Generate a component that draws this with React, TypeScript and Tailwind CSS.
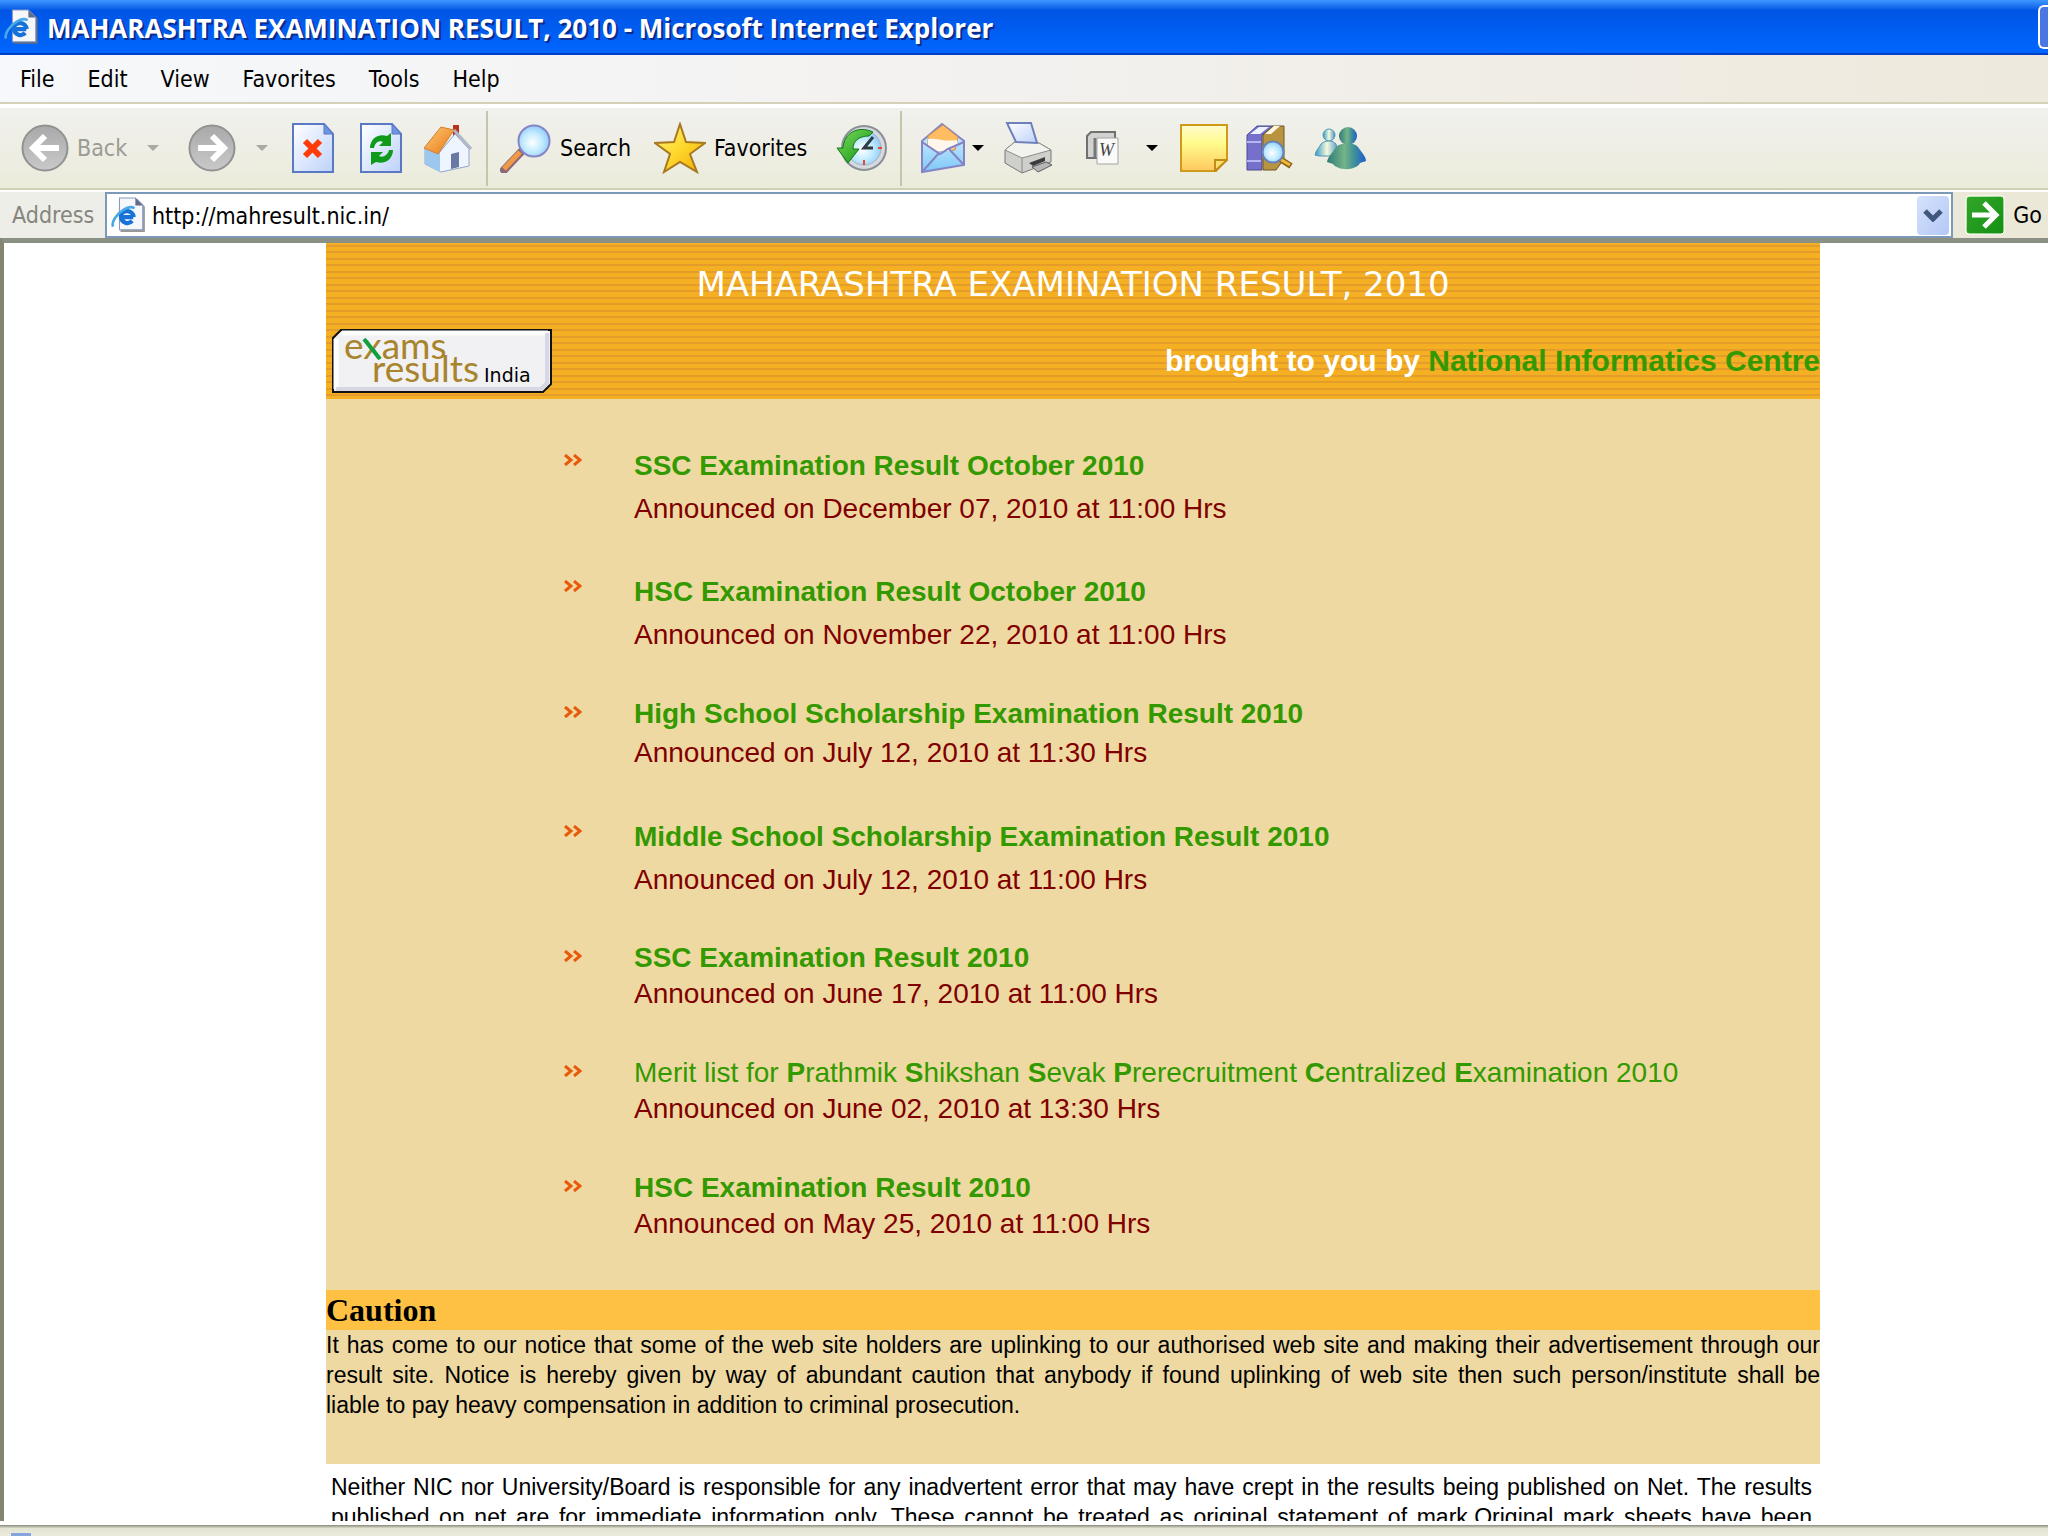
import {useState} from "react";
import type {ReactNode} from "react";

type Result = {
  title: ReactNode;
  announced: string;
  roomy?: boolean;
  gap: string;
  space: string;
};

const menus = ["File", "Edit", "View", "Favorites", "Tools", "Help"];

const results: Result[] = [
  {
    title: "SSC Examination Result October 2010",
    announced: "Announced on December 07, 2010 at 11:00 Hrs",
    roomy: true,
    gap: "gap-[7px]",
    space: "pb-[47px]",
  },
  {
    title: "HSC Examination Result October 2010",
    announced: "Announced on November 22, 2010 at 11:00 Hrs",
    roomy: true,
    gap: "gap-[7px]",
    space: "pb-[43px]",
  },
  {
    title: "High School Scholarship Examination Result 2010",
    announced: "Announced on July 12, 2010 at 11:30 Hrs",
    gap: "gap-[3px]",
    space: "pb-[48px]",
  },
  {
    title: "Middle School Scholarship Examination Result 2010",
    announced: "Announced on July 12, 2010 at 11:00 Hrs",
    roomy: true,
    gap: "gap-[7px]",
    space: "pb-[42px]",
  },
  {
    title: "SSC Examination Result 2010",
    announced: "Announced on June 17, 2010 at 11:00 Hrs",
    gap: "gap-0",
    space: "pb-[43px]",
  },
  {
    title: (
      <span className="font-normal">
        Merit list for <b>P</b>rathmik <b>S</b>hikshan <b>S</b>evak <b>P</b>
        rerecruitment <b>C</b>entralized <b>E</b>xamination 2010
      </span>
    ),
    announced: "Announced on June 02, 2010 at 13:30 Hrs",
    gap: "gap-0",
    space: "pb-[43px]",
  },
  {
    title: "HSC Examination Result 2010",
    announced: "Announced on May 25, 2010 at 11:00 Hrs",
    gap: "gap-0",
    space: "pb-[48px]",
  },
];

const uiFont = "font-['DejaVu_Sans_Condensed','Noto_Sans',sans-serif]";

const Defs = () => (
  <svg className="absolute h-0 w-0" aria-hidden="true">
    <defs>
      <linearGradient id="grey" x1="0" y1="0" x2="0" y2="1">
        <stop offset="0" stopColor="#a9a9a9" />
        <stop offset="1" stopColor="#c9c9c9" />
      </linearGradient>
      <linearGradient id="page" x1="0" y1="0" x2="1" y2="1">
        <stop offset="0" stopColor="#ffffff" />
        <stop offset="1" stopColor="#bcd2fa" />
      </linearGradient>
      <linearGradient id="gold" x1="0" y1="0" x2="1" y2="1">
        <stop offset="0" stopColor="#fff27a" />
        <stop offset="0.5" stopColor="#ffd92e" />
        <stop offset="1" stopColor="#f0a800" />
      </linearGradient>
      <linearGradient id="roof" x1="0" y1="0" x2="1" y2="1">
        <stop offset="0" stopColor="#ffc870" />
        <stop offset="1" stopColor="#e8791a" />
      </linearGradient>
      <linearGradient id="note" x1="0" y1="0" x2="0" y2="1">
        <stop offset="0" stopColor="#fffbd0" />
        <stop offset="0.4" stopColor="#fffb8a" />
        <stop offset="1" stopColor="#ffc860" />
      </linearGradient>
      <radialGradient id="lens" cx="0.45" cy="0.55" r="0.6">
        <stop offset="0" stopColor="#ffffff" />
        <stop offset="0.5" stopColor="#c4ecff" />
        <stop offset="1" stopColor="#8cc8f8" />
      </radialGradient>
      <linearGradient id="sky" x1="0" y1="0" x2="0" y2="1">
        <stop offset="0" stopColor="#e4f6ff" />
        <stop offset="1" stopColor="#7cc8f8" />
      </linearGradient>
      <linearGradient id="leaf" x1="0" y1="0" x2="1" y2="1">
        <stop offset="0" stopColor="#7ade5c" />
        <stop offset="1" stopColor="#108c10" />
      </linearGradient>
      <linearGradient id="buddy" x1="0" y1="0" x2="1" y2="0">
        <stop offset="0" stopColor="#2f7a78" />
        <stop offset="0.45" stopColor="#74b488" />
        <stop offset="0.7" stopColor="#3f8f9a" />
        <stop offset="1" stopColor="#1c5cd0" />
      </linearGradient>
      <linearGradient id="buddyPale" x1="0" y1="0" x2="1" y2="0">
        <stop offset="0" stopColor="#2f98c8" />
        <stop offset="0.5" stopColor="#f6fadc" />
        <stop offset="1" stopColor="#3f90c8" />
      </linearGradient>
    </defs>
  </svg>
);

const IePage = ({className}: {className: string}) => (
  <svg viewBox="0 0 34 34" className={className} aria-hidden="true">
    <path d="M9 2h16l7 7v24H9z" fill="#6d6d66" opacity="0.7" />
    <path d="M8 1h15l7 7v23H8z" fill="#f6f7fb" stroke="#8a9ac4" />
    <path d="M23 1v7h7z" fill="#5f6c8c" />
    <path
      d="M21 19H9.500a6 6 0 0 0 10.500 3.500M9 17.500a6.500 6.500 0 0 1 12.500 1.500"
      fill="none"
      stroke="#1672d8"
      strokeWidth="4"
    />
    <path
      d="M2 28c-2-4 3-12 10-16 5-3 9-3 10-1"
      fill="none"
      stroke="#49a8e8"
      strokeWidth="2.500"
    />
  </svg>
);

const RoundArrow = ({flip}: {flip?: boolean}) => (
  <svg viewBox="0 0 48 48" className="h-12 w-12 shrink-0" aria-hidden="true">
    <circle cx="24" cy="24" r="22.500" fill="url(#grey)" stroke="#929292" strokeWidth="2" />
    <path
      d={flip ? "M10 24h25M24 12l12 12-12 12" : "M38 24H13M24 12L12 24l12 12"}
      fill="none"
      stroke="#fff"
      strokeWidth="6"
    />
  </svg>
);

const Caret = ({muted}: {muted?: boolean}) => (
  <svg viewBox="0 0 12 8" className="h-2 w-3 shrink-0" aria-hidden="true">
    <path d="M0 1h12L6 7z" fill={muted ? "#a9a9a4" : "#000"} />
  </svg>
);

const PageShape = ({children}: {children: ReactNode}) => (
  <svg viewBox="0 0 42 50" className="h-[50px] w-[42px] shrink-0" aria-hidden="true">
    <path d="M1 1h31l9 10v38H1z" fill="url(#page)" stroke="#5a78c4" strokeWidth="2" />
    <path d="M32 1v10h9z" fill="#6f94e0" stroke="#5a78c4" />
    {children}
  </svg>
);

const StopIcon = () => (
  <PageShape>
    <path d="M13 18l15 15M28 18L13 33" stroke="#ff3b0a" strokeWidth="6" />
  </PageShape>
);

const RefreshIcon = () => (
  <PageShape>
    <path d="M10 25c0-9 8-15 17-12l4-3v13H19l4-4c-4-2-8 1-9 6z" fill="#0f9a1a" />
    <path d="M33 27c0 9-8 15-17 12l-5 3V29h12l-4 4c4 2 9-1 10-6z" fill="#0f9a1a" />
  </PageShape>
);

const HomeIcon = () => (
  <svg viewBox="0 0 50 50" className="h-[50px] w-[50px] shrink-0" aria-hidden="true">
    <path d="M31 2h6v14h-6z" fill="#b83224" />
    <path d="M3 25l14 5 16-19 14 15v17L19 49 3 41z" fill="#eef5ff" stroke="#8fa6cc" />
    <path d="M3 25l15 5v19L3 41z" fill="#9cc8f0" />
    <path d="M19 4l13 3-16 24L2 25z" fill="url(#roof)" stroke="#d08030" />
    <path d="M32 7l17 19" stroke="#b0b8c8" strokeWidth="3" />
    <path d="M29 31l8-2v15l-8 2z" fill="#6a78a4" />
  </svg>
);

const SearchIcon = () => (
  <svg viewBox="0 0 52 50" className="h-[50px] w-[52px] shrink-0" aria-hidden="true">
    <path d="M21 29L4 47" stroke="#8c6878" strokeWidth="8" strokeLinecap="round" />
    <path d="M20 29L4 46" stroke="#f09a48" strokeWidth="5" />
    <circle cx="34" cy="18" r="15.500" fill="url(#lens)" stroke="#8484c8" strokeWidth="2" />
  </svg>
);

const StarIcon = () => (
  <svg viewBox="0 0 52 52" className="h-[52px] w-[52px] shrink-0" aria-hidden="true">
    <path
      d="M26 2l6 18 19 1-15 11 7 18-17-10-16 10 6-18L1 21l19-1z"
      fill="url(#gold)"
      stroke="#a87820"
      strokeWidth="2"
    />
  </svg>
);

const HistoryIcon = () => (
  <svg viewBox="0 0 52 50" className="h-[50px] w-[52px] shrink-0" aria-hidden="true">
    <circle cx="28" cy="25" r="22" fill="#d4dae0" stroke="#8a8f96" strokeWidth="2" />
    <circle cx="28" cy="25" r="17" fill="url(#lens)" stroke="#a8b0bc" />
    <path d="M37 14L28 25h9" fill="none" stroke="#303c44" strokeWidth="3" />
    <path d="M28 37v5M42 25h4" stroke="#e84830" strokeWidth="2" />
    <path
      d="M37 9C22 2 8 10 7 25H1l11 15 11-14h-6c0-8 6-13 16-13z"
      fill="url(#leaf)"
      stroke="#107818"
    />
  </svg>
);

const MailIcon = () => (
  <svg viewBox="0 0 46 52" className="h-[52px] w-[46px] shrink-0" aria-hidden="true">
    <path d="M2 19L22 2l22 17v24L2 50z" fill="url(#sky)" stroke="#8484c4" strokeWidth="2" />
    <path d="M8 14L23 3l15 12-3 13-14 1L8 25z" fill="#ffbc60" stroke="#d0905c" />
    <path d="M8 17c10-1 14 3 29 1v6l-8 5H15l-7-4z" fill="#fff6ec" />
    <path d="M2 20l18 12 8-5 16-7M3 49l16-18M43 42L29 27" fill="none" stroke="#8484c4" strokeWidth="2" />
  </svg>
);

const PrinterIcon = () => (
  <svg viewBox="0 0 52 52" className="h-[52px] w-[52px] shrink-0" aria-hidden="true">
    <path d="M3 28l11-9 23 2 12 7v12L20 51 3 41z" fill="#cfcfcb" stroke="#77777a" />
    <path d="M3 28l17 8 29-8-12-7-23-2z" fill="#f2f2ee" stroke="#8c8c8c" />
    <path d="M20 36v14" stroke="#88888a" />
    <path d="M5 1h24l6 20-21-1z" fill="url(#page)" stroke="#6e80bc" strokeWidth="2" />
    <path d="M27 41l16-6v4l-12 5z" fill="#3c3c40" />
    <path d="M30 45l14-5 6 3-14 7z" fill="#b8b8b8" stroke="#5e5e60" />
  </svg>
);

const WordIcon = () => (
  <svg viewBox="0 0 34 36" className="h-9 w-[34px] shrink-0" aria-hidden="true">
    <path d="M5 2h24v26H1V6z" fill="#d2d2d0" stroke="#707070" strokeWidth="2" />
    <path d="M9 8v20" stroke="#777" strokeWidth="3" />
    <path d="M11 8h21v26H11z" fill="#fafafa" stroke="#a4a4a4" />
    <text x="13" y="26" fill="#444" className="font-['Liberation_Serif',serif] text-[18px] italic">
      W
    </text>
  </svg>
);

const NoteIcon = () => (
  <svg viewBox="0 0 48 48" className="h-12 w-12 shrink-0" aria-hidden="true">
    <path d="M1 1h46v34L36 47H1z" fill="url(#note)" stroke="#cf9a18" strokeWidth="2" />
    <path d="M35 47V36h12z" fill="#f8e070" stroke="#c08c14" strokeWidth="2" />
  </svg>
);

const BooksIcon = () => (
  <svg viewBox="0 0 48 46" className="h-[46px] w-12 shrink-0" aria-hidden="true">
    <path d="M1 10L11 1h16L16 10v35H1z" fill="#7470cc" stroke="#4c4890" />
    <path d="M4 9l9-7h10l-9 7z" fill="#eef2ff" />
    <path d="M1 17h14M1 36h14" stroke="#b8b6f2" strokeWidth="2" />
    <path d="M17 10L27 1h11v33l-8 11H17z" fill="#b99440" stroke="#6c5620" />
    <path d="M19 9l9-8h6l-9 8z" fill="#fff6e0" />
    <path d="M34 34l11 7" stroke="#8a6414" strokeWidth="6" />
    <path d="M34 34l10 6" stroke="#f0b83c" strokeWidth="3" />
    <circle cx="27" cy="27" r="10.500" fill="url(#lens)" stroke="#6484b8" strokeWidth="2" />
  </svg>
);

const PeopleIcon = () => (
  <svg viewBox="0 0 52 44" className="h-11 w-[52px] shrink-0" aria-hidden="true">
    <circle cx="15" cy="9" r="6" fill="url(#buddyPale)" stroke="#4f98b4" />
    <path d="M1 29c1-5 4-7 6-11 4-4 12-4 15 0l3 12H5z" fill="url(#buddyPale)" stroke="#4f98b4" />
    <circle cx="34" cy="10" r="9" fill="url(#buddy)" />
    <path d="M13 36c1-6 6-9 9-15 5-5 18-5 22 0 3 5 8 9 8 14l-6 2c-4 8-22 8-27 1z" fill="url(#buddy)" />
  </svg>
);

const Divider = ({className}: {className: string}) => (
  <div className={`h-[75px] w-[2px] shrink-0 bg-[#c5c5ac] ${className}`} />
);

const TitleBar = () => (
  <header className="flex h-[55px] items-center border-b-2 border-[#0040c8] bg-linear-to-b from-[#3f96ff] via-[#0055e5] via-20% to-[#0066ff]">
    <IePage className="ml-1 h-9 w-9 shrink-0" />
    <h1 className="ml-[7px] flex-1 truncate pt-1 font-['Open_Sans',sans-serif] text-[26px] font-bold text-white [text-shadow:2px_2px_0_#0a2a8c]">
      MAHARASHTRA EXAMINATION RESULT, 2010 - Microsoft Internet Explorer
    </h1>
    <button
      type="button"
      aria-label="Minimize"
      className="h-11 w-[10px] rounded-l-md border-2 border-r-0 border-white bg-[#4a76e4]"
    />
  </header>
);

const MenuBar = () => (
  <nav className="flex h-[49px] items-center gap-[33px] border-b-2 border-[#d4d1b8] bg-linear-to-r from-[#f6f8fb] via-[#f3f1ef] to-[#eee9dc] pl-5">
    {menus.map((menu) => (
      <button key={menu} type="button" className="text-[23px] leading-7">
        {menu}
      </button>
    ))}
  </nav>
);

const Toolbar = () => (
  <div className="flex h-[86px] items-center overflow-hidden border-t-4 border-b-2 border-t-white border-b-[#d2d0b4] bg-linear-to-b from-[#f1f1ee] to-[#ebebdb] pl-[21px] text-[23px]">
    <button type="button" disabled className="flex items-center gap-2 text-[#9b9b94]">
      <RoundArrow />
      <span className="w-[63px] text-left">Back</span>
    </button>
    <button type="button" disabled aria-label="Back history" className="ml-[7px]">
      <Caret muted />
    </button>
    <button type="button" disabled aria-label="Forward" className="ml-[29px]">
      <RoundArrow flip />
    </button>
    <button type="button" disabled aria-label="Forward history" className="ml-5">
      <Caret muted />
    </button>
    <button type="button" aria-label="Stop" className="ml-6">
      <StopIcon />
    </button>
    <button type="button" aria-label="Refresh" className="ml-[26px]">
      <RefreshIcon />
    </button>
    <button type="button" aria-label="Home" className="ml-5">
      <HomeIcon />
    </button>
    <Divider className="ml-[14px]" />
    <button type="button" className="ml-3 flex items-center gap-2">
      <SearchIcon />
      <span className="w-[88px] text-left">Search</span>
    </button>
    <button type="button" className="ml-[6px] flex items-center gap-2">
      <StarIcon />
      <span className="w-[104px] text-left">Favorites</span>
    </button>
    <button type="button" aria-label="History" className="ml-[18px]">
      <HistoryIcon />
    </button>
    <Divider className="ml-3" />
    <button type="button" aria-label="Mail" className="ml-[18px] flex items-center gap-[6px]">
      <MailIcon />
      <Caret />
    </button>
    <button type="button" aria-label="Print" className="ml-[18px]">
      <PrinterIcon />
    </button>
    <button type="button" aria-label="Edit with Word" className="ml-8 flex items-center gap-[26px]">
      <WordIcon />
      <Caret />
    </button>
    <button type="button" aria-label="Notes" className="ml-[22px]">
      <NoteIcon />
    </button>
    <button type="button" aria-label="Research" className="ml-[18px]">
      <BooksIcon />
    </button>
    <button type="button" aria-label="Messenger" className="ml-5">
      <PeopleIcon />
    </button>
  </div>
);

const AddressBar = () => {
  const [url, setUrl] = useState("http://mahresult.nic.in/");

  return (
    <form
      onSubmit={(e) => e.preventDefault()}
      className="flex h-12 items-center border-t-2 border-white bg-linear-to-r from-[#eeeee9] to-[#ebe8d8] pr-[6px] pl-3 text-[23px]"
    >
      <label htmlFor="address" className="w-[93px] text-[#85857e]">
        Address
      </label>
      <div className="flex h-[46px] flex-1 items-center border-2 border-[#7c9ab8] bg-white pr-[2px] pl-1">
        <IePage className="h-9 w-9 shrink-0" />
        <input
          id="address"
          value={url}
          onChange={(e) => setUrl(e.target.value)}
          className="ml-[5px] flex-1 bg-transparent pt-[3px] outline-none"
        />
        <button
          type="button"
          aria-label="Show addresses"
          className="flex h-[39px] w-8 items-center justify-center rounded-sm bg-linear-to-br from-[#d6e2fc] to-[#b4c8f6]"
        >
          <svg viewBox="0 0 20 14" className="h-[14px] w-5" aria-hidden="true">
            <path d="M2 3l8 8 8-8" fill="none" stroke="#40587c" strokeWidth="5" />
          </svg>
        </button>
      </div>
      <button type="submit" className="ml-3 flex items-center gap-2">
        <svg viewBox="0 0 40 40" className="h-10 w-10 shrink-0" aria-hidden="true">
          <rect x="1" y="1" width="38" height="38" rx="3" fill="url(#leaf)" stroke="#fff" />
          <rect x="2" y="2" width="36" height="36" rx="3" fill="#159015" opacity="0.7" />
          <path d="M7 20h22M19 8l12 12-12 12" fill="none" stroke="#fff" strokeWidth="5" />
        </svg>
        Go
      </button>
    </form>
  );
};

const Logo = () => (
  <svg viewBox="0 0 220 64" className="h-16 w-[220px]" role="img" aria-label="exams results India">
    <path d="M9 1h210v54l-8 8H1V9z" fill="#f1f1f4" stroke="#111" strokeWidth="2" />
    <path d="M10 4h206M4 10v50" stroke="#fff" strokeWidth="5" />
    <path d="M215 4v50l-6 6H4" fill="none" stroke="#d5d7e4" strokeWidth="4" />
    <g fill="#a8842c" className="font-['Lato',sans-serif] text-[37px]">
      <text x="12" y="30">exams</text>
      <text x="40" y="53">results</text>
    </g>
    <path d="M32 10l16 20" stroke="#10a040" strokeWidth="4" />
    <text x="152" y="53" className="font-['DejaVu_Sans',sans-serif] text-[19px]">
      India
    </text>
  </svg>
);

const Banner = () => (
  <div className="flex h-[156px] flex-col bg-[repeating-linear-gradient(to_bottom,#f4b022_0px,#f4b022_2px,#e49d2a_2px,#e49d2a_4px,#f4b022_4px,#f4b022_8px,#e49d2a_8px,#e49d2a_10px,#f4b022_10px,#f4b022_13px)]">
    <h2 className="pt-[23px] text-center font-['DejaVu_Sans',sans-serif] text-[34px] leading-9 text-white">
      MAHARASHTRA EXAMINATION RESULT, 2010
    </h2>
    <div className="flex items-start justify-between pt-[27px] pl-[6px]">
      <Logo />
      <p className="pt-[14px] text-[30px] leading-9 font-bold text-white">
        brought to you by{" "}
        <a href="#nic" className="text-[#339900]">
          National Informatics Centre
        </a>
      </p>
    </div>
  </div>
);

const ResultItem = ({result}: {result: Result}) => (
  <li className={`flex gap-[52px] ${result.space}`}>
    <svg
      viewBox="0 0 18 12"
      className={`h-3 w-[18px] shrink-0 ${result.roomy ? "mt-[6px]" : "mt-[10px]"}`}
      aria-hidden="true"
    >
      <path d="M1 1l6 5-6 5M10 1l6 5-6 5" fill="none" stroke="#e8590c" strokeWidth="3" />
    </svg>
    <div className={`flex flex-col text-[28px] leading-9 ${result.gap}`}>
      <a href="#result" className="font-bold text-[#339900]">
        {result.title}
      </a>
      <p className="text-[#800000]">{result.announced}</p>
    </div>
  </li>
);

const App = () => {
  return (
    <div className={`flex h-screen flex-col overflow-hidden bg-[#ebebdb] text-black ${uiFont}`}>
      <Defs />
      <TitleBar />
      <MenuBar />
      <Toolbar />
      <AddressBar />
      <main className="min-h-0 flex-1 overflow-hidden border-t-[5px] border-l-4 border-t-[#8b9085] border-l-[#84846f] bg-white pr-[228px] pl-[322px] font-['Liberation_Sans',Arial,sans-serif]">
        <Banner />
        <section className="bg-[#efd9a2]">
          <ul className="pt-[49px] pl-[238px]">
            {results.map((result) => (
              <ResultItem key={result.announced} result={result} />
            ))}
          </ul>
          <h3 className="bg-[#fec143] font-['Liberation_Serif',serif] text-[32px] leading-10 font-bold">
            Caution
          </h3>
          <div className="pb-11 text-justify text-[23px] leading-[30px]">
            <p className="[text-align-last:justify]">
              It has come to our notice that some of the web site holders are
              uplinking to our authorised web site and making their
              advertisement through our result site. Notice is hereby given by
              way of abundant caution that anybody if found uplinking of web
              site then such person/institute shall be
            </p>
            <p>
              liable to pay heavy compensation in addition to criminal
              prosecution.
            </p>
          </div>
        </section>
        <p className="pt-2 pr-2 pl-[5px] text-justify text-[23px] leading-[30px] [text-align-last:justify]">
          Neither NIC nor University/Board is responsible for any inadvertent
          error that may have crept in the results being published on Net. The
          results published on net are for immediate information only. These
          cannot be treated as original statement of mark.Original mark sheets
          have been
        </p>
      </main>
      <footer className="h-[15px] shrink-0 border-t-4 border-white bg-linear-to-b from-[#8a8a7c] via-[#e4e4d4] via-30% to-[#ebebdb] pt-[8px] pl-[11px]">
        <div className="h-1 w-5 bg-[#86a4e0]" />
      </footer>
    </div>
  );
};

export default App;
